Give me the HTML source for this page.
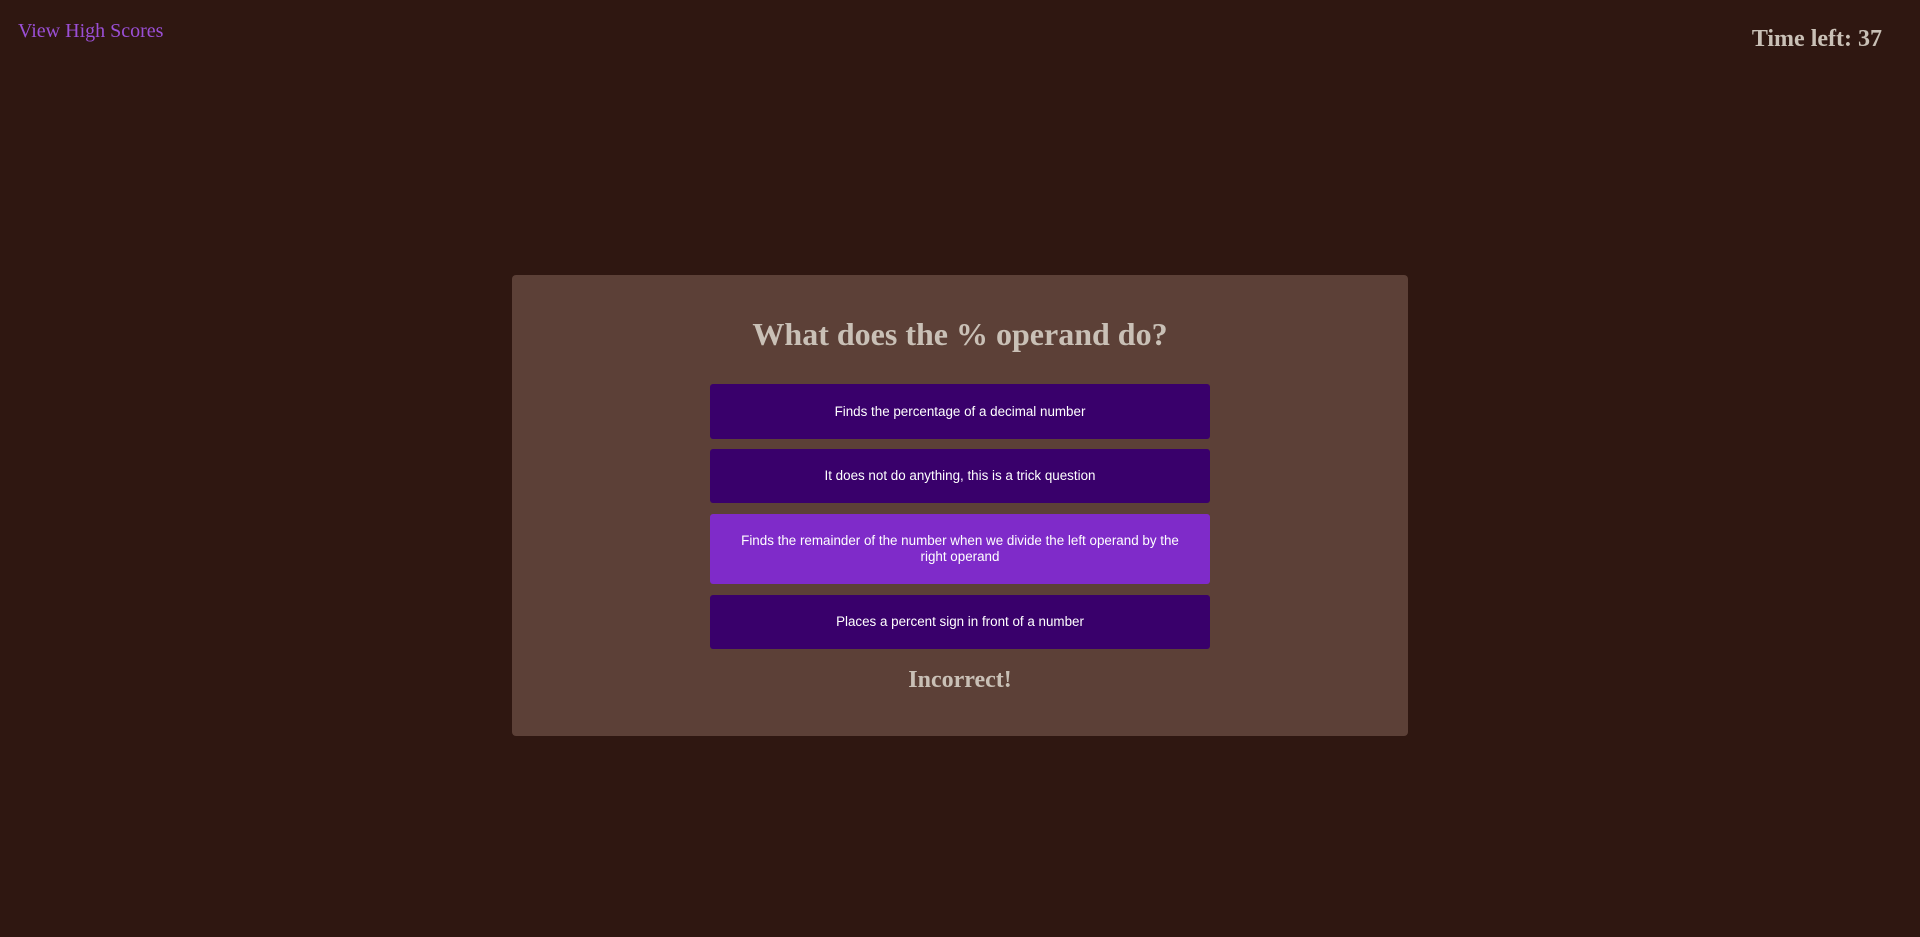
<!DOCTYPE html>
<html><head><style>
body{margin:0;width:1920px;height:937px;background:#2f1711;font-family:"Liberation Serif",serif;position:relative;overflow:hidden}
.hs{position:absolute;left:18px;top:20px;color:#9b4fd6;font-size:20px}
.tl{position:absolute;right:38px;top:26px;color:#c9c0b6;font-size:24px;font-weight:bold}
.card{position:absolute;left:512px;top:275px;width:896px;height:461px;background:#5c4037;border-radius:4px;text-align:center}
h1{margin:0;position:absolute;top:314px;width:100%;font-size:32px;color:#c9c0b6;line-height:40px}
.b{position:absolute;left:198px;width:500px;background:#39006b;color:#fff;font-family:"Liberation Sans",sans-serif;font-size:13.4px;border-radius:3px;display:flex;align-items:center;justify-content:center;box-sizing:border-box;padding:0 30px;line-height:16px}
.r{position:absolute;top:392px;width:100%;font-size:24px;font-weight:bold;color:#c9c0b6}
</style></head><body>
<div class="hs">View High Scores</div>
<div class="tl">Time left: 37</div>
<div class="card">
<h1 style="top:39px">What does the % operand do?</h1>
<div class="b" style="top:109px;height:55px">Finds the percentage of a decimal number</div>
<div class="b" style="top:174px;height:54px">It does not do anything, this is a trick question</div>
<div class="b" style="top:239px;height:70px;background:#7f2bc9">Finds the remainder of the number when we divide the left operand by the right operand</div>
<div class="b" style="top:320px;height:54px">Places a percent sign in front of a number</div>
<div class="r">Incorrect!</div>
</div>
</body></html>
